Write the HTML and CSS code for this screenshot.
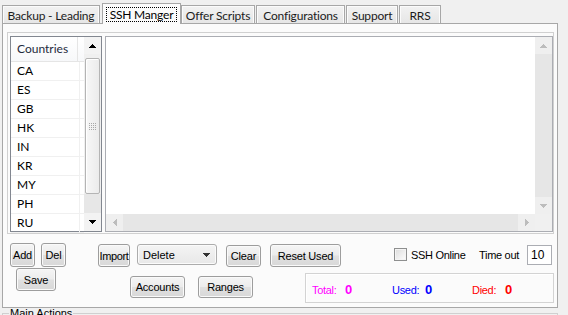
FILE: index.html
```html
<!DOCTYPE html>
<html>
<head>
<meta charset="utf-8">
<link rel="stylesheet" href="styles.css">
</head>
<body>
<div class="tabs">
  <div class="tab t1">Backup - Leading</div>
  <div class="tab active"><span class="focus">SSH Manger</span></div>
  <div class="tab t3">Offer Scripts</div>
  <div class="tab t4">Configurations</div>
  <div class="tab t5">Support</div>
  <div class="tab t6">RRS</div>
</div>
<div class="page">
  <div class="panel">
    <div class="listview">
      <div class="lv-main">
        <div class="lv-header"><div class="lv-col">Countries</div><div class="lv-rest"></div></div>
        <div class="lv-row"><span class="cell">CA</span></div>
        <div class="lv-row"><span class="cell">ES</span></div>
        <div class="lv-row"><span class="cell">GB</span></div>
        <div class="lv-row"><span class="cell">HK</span></div>
        <div class="lv-row"><span class="cell">IN</span></div>
        <div class="lv-row"><span class="cell">KR</span></div>
        <div class="lv-row"><span class="cell">MY</span></div>
        <div class="lv-row"><span class="cell">PH</span></div>
        <div class="lv-row"><span class="cell">RU</span></div>
      </div>
      <div class="vscroll dark">
        <div class="sb-btn up"><svg width="7" height="4" viewBox="0 0 7 4" shape-rendering="crispEdges"><path d="M3 0h1v1h-1zM2 1h3v1h-3zM1 2h5v1h-5zM0 3h7v1h-7z" fill="#000"/></svg></div>
        <div class="gap"></div>
        <div class="thumb"><svg width="7" height="7" viewBox="0 0 7 7" shape-rendering="crispEdges"><path d="M0 0h1v1h-1zM2 0h1v1h-1zM4 0h1v1h-1zM6 0h1v1h-1zM0 2h1v1h-1zM2 2h1v1h-1zM4 2h1v1h-1zM6 2h1v1h-1zM0 4h1v1h-1zM2 4h1v1h-1zM4 4h1v1h-1zM6 4h1v1h-1zM0 6h1v1h-1zM2 6h1v1h-1zM4 6h1v1h-1zM6 6h1v1h-1z" fill="#a8a8a8"/></svg></div>
        <div class="track"></div>
        <div class="sb-btn down"><svg width="7" height="4" viewBox="0 0 7 4" shape-rendering="crispEdges"><path d="M0 0h7v1h-7zM1 1h5v1h-5zM2 2h3v1h-3zM3 3h1v1h-1z" fill="#000"/></svg></div>
      </div>
    </div>
    <div class="textbox">
      <div class="tb-area"></div>
      <div class="vscroll light">
        <div class="sb-btn up"><svg width="7" height="4" viewBox="0 0 7 4" shape-rendering="crispEdges"><path d="M3 0h1v1h-1zM2 1h3v1h-3zM1 2h5v1h-5zM0 3h7v1h-7z" fill="#bcbcbc"/></svg></div>
        <div class="track"></div>
        <div class="sb-btn down"><svg width="7" height="4" viewBox="0 0 7 4" shape-rendering="crispEdges"><path d="M0 0h7v1h-7zM1 1h5v1h-5zM2 2h3v1h-3zM3 3h1v1h-1z" fill="#bcbcbc"/></svg></div>
      </div>
      <div class="hscroll">
        <div class="sb-btn left"><svg width="4" height="7" viewBox="0 0 4 7" shape-rendering="crispEdges"><path d="M0 3h1v1h-1zM1 2h1v3h-1zM2 1h1v5h-1zM3 0h1v7h-1z" fill="#bcbcbc"/></svg></div>
        <div class="track"></div>
        <div class="sb-btn right"><svg width="4" height="7" viewBox="0 0 4 7" shape-rendering="crispEdges"><path d="M0 0h1v7h-1zM1 1h1v5h-1zM2 2h1v3h-1zM3 3h1v1h-1z" fill="#bcbcbc"/></svg></div>
      </div>
      <div class="corner"></div>
    </div>
  </div>
  <div class="row1">
    <div class="btn b-add">Add</div>
    <div class="btn b-del">Del</div>
    <div class="btn b-import">Import</div>
    <div class="combo"><span>Delete</span><svg width="7" height="4" viewBox="0 0 7 4" shape-rendering="crispEdges"><path d="M0 0h7v1h-7zM1 1h5v1h-5zM2 2h3v1h-3zM3 3h1v1h-1z" fill="#333"/></svg></div>
    <div class="btn b-clear">Clear</div>
    <div class="btn b-reset">Reset Used</div>
    <div class="chk-wrap"><span class="chk"></span><span class="lbl">SSH Online</span></div>
    <div class="timeout"><span class="lbl">Time out</span><span class="tbox">10</span></div>
  </div>
  <div class="row2">
    <div class="btn b-save">Save</div>
    <div class="btn b-acc">Accounts</div>
    <div class="btn b-ranges">Ranges</div>
    <div class="stats">
      <div class="grp total"><span class="k">Total:</span><span class="v">0</span></div>
      <div class="grp used"><span class="k">Used:</span><span class="v">0</span></div>
      <div class="grp died"><span class="k">Died:</span><span class="v">0</span></div>
    </div>
  </div>
</div>
<fieldset class="group"><legend>Main Actions</legend></fieldset>
</body>
</html>
```
FILE: styles.css
```css
* { box-sizing: border-box; }
html, body { margin: 0; padding: 0; overflow: hidden; }
body {
  width: 568px;
  height: 315px;
  background: #f0f0f0;
  font-family: "Liberation Sans", Arial, sans-serif;
  font-size: 11px;
  color: #000;
}

/* Tabs */
.tabs {
  display: flex;
  align-items: flex-end;
  height: 23px;
  padding-left: 2px;
}
.tab {
  height: 18px;
  border: 1px solid #a7a7a7;
  border-bottom: none;
  background: linear-gradient(#f2f2f2, #e6e6e6);
  box-shadow: inset 1px 1px 0 #fbfbfb, inset -1px 0 0 #fbfbfb;
  font-family: Lato, "Noto Sans", sans-serif;
  font-size: 12px;
  letter-spacing: -0.2px;
  color: #1c1c1c;
  display: flex;
  align-items: center;
  justify-content: center;
  margin-left: 1px;
  padding-top: 1px;
}
.t1 { width: 98px; margin-left: 0; }
.active {
  width: 79px;
  height: 21px;
  margin-left: 2px;
  margin-bottom: -1px;
  background: #fbfbfb;
  box-shadow: none;
  position: relative;
  z-index: 1;
  color: #000;
  padding-top: 0;
  align-items: flex-start;
}
.focus {
  margin-top: 3px;
  padding: 0 3px;
  height: 15px;
  line-height: 14px;
  border: 1px dotted #000;
}
.t3 { width: 74px; margin-left: 0; }
.t4 { width: 89px; }
.t5 { width: 52px; }
.t6 { width: 42px; }

/* Tab page */
.page {
  margin-left: 2px;
  width: 556px;
  height: 285px;
  border: 1px solid #a7a7a7;
  background: #fbfbfb;
}
.panel {
  margin: 8px 0 0 4px;
  width: 547px;
  height: 202px;
  border: 1px solid #d0d0d0;
  display: flex;
  padding: 3px 0 0 2px;
}

/* List view */
.listview {
  width: 92px;
  height: 196px;
  border: 1px solid #828790;
  background: #fff;
  display: flex;
}
.lv-main { width: 73px; }
.lv-header {
  height: 25px;
  display: flex;
  border-bottom: 1px solid #e5e5e5;
  background: linear-gradient(#ffffff, #f7f8fa);
}
.lv-col {
  width: 67px;
  border-right: 1px solid #e5e5e5;
  padding-left: 6px;
  font-family: Lato, "Noto Sans", sans-serif;
  font-size: 12px;
  line-height: 24px;
  color: #1e2a3c;
}
.lv-rest { flex: 1; }
.lv-row {
  height: 19px;
  display: flex;
  border-bottom: 1px solid #f0f0f0;
}
.cell {
  width: 69px;
  border-right: 1px solid #f0f0f0;
  padding-left: 6px;
  font-family: Lato, "Noto Sans", sans-serif;
  font-size: 12px;
  line-height: 18px;
  color: #000;
}

/* Scrollbars */
.vscroll {
  width: 17px;
  display: flex;
  flex-direction: column;
  background: #eaeaea;
}
.sb-btn {
  display: flex;
  align-items: center;
  justify-content: center;
  background: #f3f3f3;
}
.vscroll .sb-btn { height: 17px; }
.dark .sb-btn.down { height: 18px; }
.gap { height: 4px; background: #f0f0f0; }
.thumb {
  height: 136px;
  margin: 0 1px;
  border: 1px solid #b4b4b4;
  border-radius: 2px;
  background: linear-gradient(to right, #f7f7f7, #ebebeb);
  box-shadow: inset 1px 1px 0 #fff;
  display: flex;
  align-items: center;
  justify-content: center;
}
.vscroll .track { flex: 1; background: #e7e7e7; }
.dark { background: #f0f0f0; }

/* Text box */
.textbox {
  margin-left: 3px;
  width: 448px;
  height: 196px;
  border: 1px solid #abadb3;
  display: grid;
  grid-template-columns: 1fr 17px;
  grid-template-rows: 1fr 17px;
  background: #fff;
}
.tb-area { background: #fff; }
.light .track { background: #e6e6e6; }
.light .sb-btn { background: #efefef; }
.hscroll { display: flex; background: #e6e6e6; }
.hscroll .sb-btn { width: 17px; background: #efefef; }
.hscroll .track { flex: 1; }
.corner { background: #f0f0f0; }

/* Controls */
.btn {
  border: 1px solid #9d9d9d;
  border-radius: 3px;
  background: linear-gradient(#f5f5f5 0%, #ececec 48%, #e0e0e0 52%, #d8d8d8 100%);
  box-shadow: inset 0 0 0 1px #fafafa;
  display: flex;
  align-items: center;
  justify-content: center;
  font-size: 11px;
  letter-spacing: -0.2px;
  color: #000;
  white-space: nowrap;
}
.row1 {
  display: flex;
  align-items: flex-start;
  height: 25px;
  margin-top: 9px;
}
.b-add { margin-left: 7px; width: 25px; height: 24px; }
.b-del { margin-left: 6px; width: 25px; height: 24px; }
.b-import { margin-left: 32px; width: 32px; height: 23px; margin-top: 1px; letter-spacing: -0.4px; }
.combo {
  margin-left: 7px;
  margin-top: 1px;
  width: 80px;
  height: 21px;
  border: 1px solid #acacac;
  border-radius: 3px;
  background: linear-gradient(#f4f4f4, #e8e8e8);
  box-shadow: inset 0 0 0 1px #fbfbfb;
  display: flex;
  align-items: center;
  justify-content: space-between;
  padding: 0 6px 0 5px;
}
.b-clear { margin-left: 9px; width: 35px; height: 22px; margin-top: 2px; }
.b-reset { margin-left: 9px; width: 71px; height: 23px; margin-top: 1px; }
.chk-wrap {
  margin-left: 53px;
  margin-top: 5px;
  display: flex;
  align-items: center;
}
.chk {
  width: 13px;
  height: 13px;
  border: 1px solid #8e8f8f;
  background: linear-gradient(135deg, #dcdcdc, #fefefe);
  box-shadow: inset 0 0 0 1px #f4f4f4;
}
.lbl { letter-spacing: -0.3px; }
.chk-wrap .lbl { margin-left: 4px; }
.timeout {
  margin-left: auto;
  margin-right: 5px;
  margin-top: 2px;
  display: flex;
  align-items: center;
}
.tbox {
  margin-left: 8px;
  width: 25px;
  height: 20px;
  border: 1px solid #abadb3;
  background: #fff;
  padding-left: 3px;
  font-size: 12px;
  line-height: 18px;
}
.row2 {
  display: flex;
  align-items: flex-start;
}
.b-save { margin-left: 13px; width: 40px; height: 23px; }
.b-acc { margin-left: 74px; width: 55px; height: 22px; margin-top: 8px; }
.b-ranges { margin-left: 13px; width: 55px; height: 22px; margin-top: 8px; }
.stats {
  margin-left: 52px;
  margin-top: 5px;
  width: 249px;
  height: 30px;
  border: 1px solid #d3d3d3;
  box-shadow: inset 1px 1px 0 #fff;
  display: flex;
  align-items: center;
  padding: 2px 0 0 6px;
}
.grp { width: 80px; display: flex; align-items: baseline; }
.k { width: 33px; font-size: 11px; letter-spacing: -0.3px; }
.v { font-size: 13px; font-weight: bold; }
.total { color: #ff00ff; }
.used { color: #0000ff; }
.died { color: #ff0000; }

/* Bottom group */
.group {
  margin: 0 0 0 2px;
  width: 556px;
  height: 7px;
  border: 1px solid #d0d0d0;
  border-bottom: none;
  padding: 0 6px;
  overflow: visible;
}
.group legend {
  padding: 0 1px;
  font-size: 11px;
  line-height: 11px;
  color: #000;
}
```
